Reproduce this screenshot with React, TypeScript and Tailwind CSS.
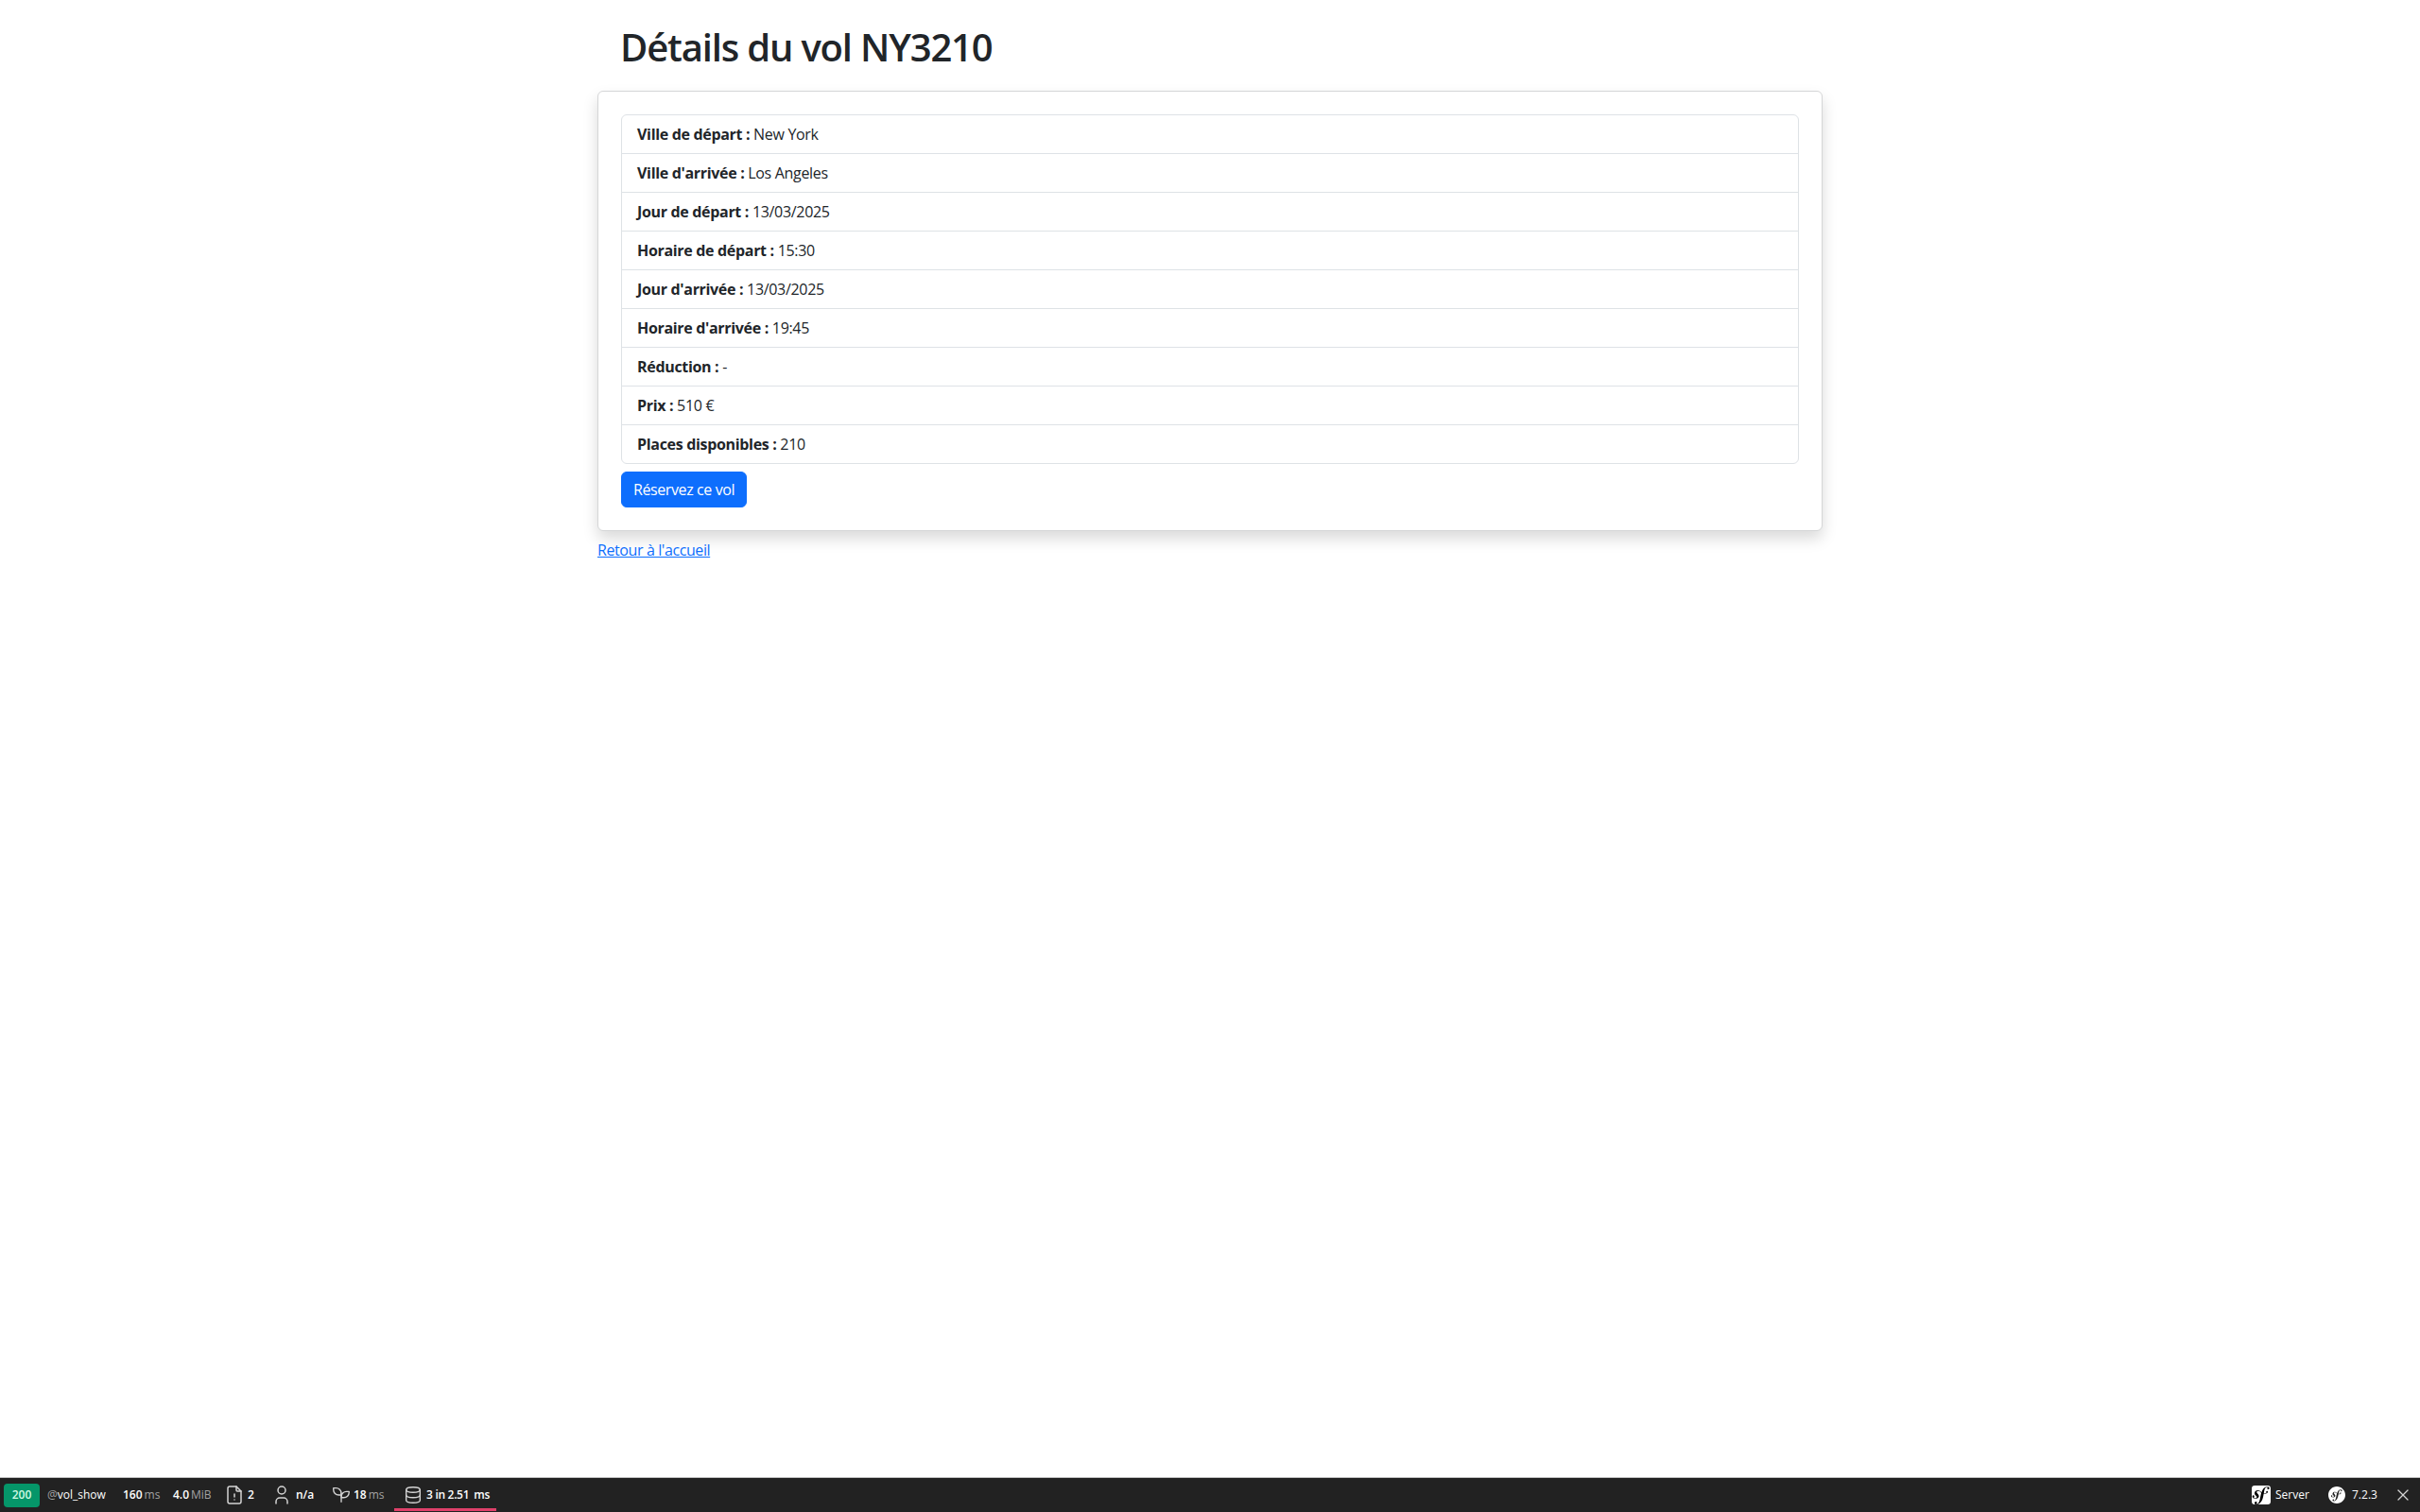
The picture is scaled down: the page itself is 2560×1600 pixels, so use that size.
import React from 'react';
import { TbDatabase, TbFileAlert, TbUser, TbX } from 'react-icons/tb';
import { SiSymfony } from 'react-icons/si';

const rows = [
  { label: 'Ville de départ :', value: 'New York' },
  { label: "Ville d'arrivée :", value: 'Los Angeles' },
  { label: 'Jour de départ :', value: '13/03/2025' },
  { label: 'Horaire de départ :', value: '15:30' },
  { label: "Jour d'arrivée :", value: '13/03/2025' },
  { label: "Horaire d'arrivée :", value: '19:45' },
  { label: 'Réduction :', value: '-' },
  { label: 'Prix :', value: '510 €' },
  { label: 'Places disponibles :', value: '210' },
];

const Seedling: React.FC = () => (
  <svg viewBox="0 0 24 24" fill="none" stroke="currentColor" strokeWidth={1.5} strokeLinecap="round" strokeLinejoin="round" className="w-[22px] h-[22px] shrink-0 text-[#d4d4d4]">
    <path d="M12 10a6 6 0 0 0 -6 -6h-3v2a6 6 0 0 0 6 6h3" />
    <path d="M12 14a6 6 0 0 1 6 -6h3v1a6 6 0 0 1 -6 6h-3" />
    <path d="M12 20l0 -10" />
  </svg>
);

const Toolbar: React.FC = () => (
  <div className="fixed bottom-0 left-0 right-0 h-[37px] bg-[#222222] text-white text-[12px] leading-[16px] tracking-normal whitespace-nowrap flex items-center justify-between border-t border-[#c4c4c4]">
    <div className="flex items-center h-full">
      <span className="ml-[4px] w-[38px] h-[25px] shrink-0 bg-[#059669] rounded-[4px] flex items-center justify-center font-semibold text-[#d1fae5]">200</span>
      <span className="ml-[8px] w-[80px] shrink-0 text-[#a3a3a3]">@<span className="text-white">vol_show</span></span>
      <span className="w-[53px] shrink-0 font-semibold">160<span className="ml-[2px] font-normal text-[#a3a3a3]">ms</span></span>
      <span className="w-[53px] shrink-0 font-semibold">4.0<span className="ml-[2px] font-normal text-[#a3a3a3]">MiB</span></span>
      <TbFileAlert className="w-[24px] h-[24px] shrink-0 text-[#d4d4d4]" strokeWidth={1.5} />
      <span className="w-[26px] shrink-0 pl-[2px] font-semibold">2</span>
      <TbUser className="w-[24px] h-[24px] shrink-0 text-[#d4d4d4]" strokeWidth={1.5} />
      <span className="w-[40px] shrink-0 pl-[3px] font-semibold">n/a</span>
      <Seedling />
      <span className="w-[45px] shrink-0 pl-[2px] font-semibold">18<span className="ml-[2px] font-normal text-[#a3a3a3]">ms</span></span>
      <div className="relative h-full w-[108px] shrink-0 flex items-center pl-[9px]">
        <TbDatabase className="w-[22px] h-[22px] shrink-0 text-[#d4d4d4]" strokeWidth={1.5} />
        <span className="ml-[3px] font-semibold tracking-[-0.3px]">3 in 2.51</span>
        <span className="ml-[5px] font-semibold tracking-[-0.3px]">ms</span>
        <div className="absolute left-0 right-0 bottom-[1px] h-[3px] bg-[#e0406a]" />
      </div>
    </div>
    <div className="flex items-center h-full mr-[8px]">
      <div className="w-[20px] h-[20px] shrink-0 rounded-[3px] bg-black overflow-hidden flex items-center justify-center">
        <SiSymfony className="w-[28px] h-[28px] shrink-0 text-white" />
      </div>
      <span className="ml-[5px] w-[56px] shrink-0">Server</span>
      <SiSymfony className="w-[18px] h-[18px] shrink-0 text-white" />
      <span className="ml-[7px] w-[44px] shrink-0">7.2.3</span>
      <TbX className="w-[20px] h-[20px] shrink-0 text-[#d4d4d4]" strokeWidth={1.5} />
    </div>
  </div>
);

export default function App() {
  return (
    <div className="min-h-[1600px] bg-white text-[#212529] text-[16px] leading-[24px] tracking-[-0.32px] font-['Open_Sans','Liberation_Sans',sans-serif]">
      <div className="w-[1296px] mx-auto">
        <h1 className="pt-[26px] px-[24px] h-[96px] text-[40px] leading-[48px] font-semibold tracking-[-1.17px]">Détails du vol NY3210</h1>
        <div className="bg-white border border-[#d5d6d7] rounded-[6px] p-[24px] shadow-[0_8px_16px_rgba(0,0,0,0.15)]">
          <ul className="border border-[#dee2e6] rounded-[6px] bg-white">
            {rows.map((row, i) => (
              <li key={row.label} className={`px-[16px] py-[8px] ${i > 0 ? 'border-t border-[#dee2e6]' : ''}`}>
                <strong className="font-bold">{row.label}</strong> {row.value}
              </li>
            ))}
          </ul>
          <button className="mt-[8px] bg-[#0d6efd] text-white rounded-[6px] px-[12px] py-[6px] border border-[#0d6efd] tracking-[-0.4px]">Réservez ce vol</button>
        </div>
        <a href="#" className="block mt-[8px] w-fit text-[#0d6efd] underline tracking-[-0.4px]">Retour à l'accueil</a>
      </div>
      <Toolbar />
    </div>
  );
}
